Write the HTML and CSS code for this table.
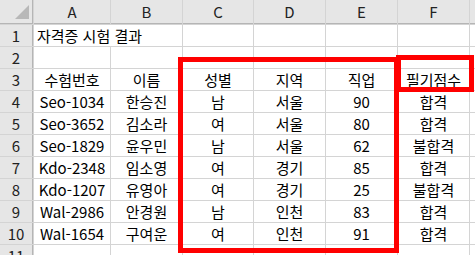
FILE: index.html
```html
<!DOCTYPE html>
<html lang="ko">
<head>
<meta charset="utf-8">
<link rel="stylesheet" href="styles.css">
</head>
<body>
<div class="sheet">
  <div class="grid">
    <div class="hd corner"><svg class="tri" width="14" height="14" viewBox="0 0 14 14"><polygon points="14,0 14,14 0,14" fill="#b8b8b8"/></svg></div>
    <div class="hd col">A</div><div class="hd col">B</div><div class="hd col">C</div><div class="hd col">D</div><div class="hd col">E</div><div class="hd col">F</div><div class="hd col"></div>

    <div class="hd row">1</div><div class="c title">자격증 시험 결과</div><div class="c"></div><div class="c"></div><div class="c"></div><div class="c"></div><div class="c"></div>
    <div class="hd row">2</div><div class="c"></div><div class="c"></div><div class="c"></div><div class="c"></div><div class="c"></div><div class="c"></div><div class="c"></div>
    <div class="hd row">3</div><div class="c">수험번호</div><div class="c">이름</div><div class="c">성별</div><div class="c">지역</div><div class="c">직업</div><div class="c">필기점수</div><div class="c"></div>
    <div class="hd row">4</div><div class="c">Seo-1034</div><div class="c">한승진</div><div class="c">남</div><div class="c">서울</div><div class="c">90</div><div class="c">합격</div><div class="c"></div>
    <div class="hd row">5</div><div class="c">Seo-3652</div><div class="c">김소라</div><div class="c">여</div><div class="c">서울</div><div class="c">80</div><div class="c">합격</div><div class="c"></div>
    <div class="hd row">6</div><div class="c">Seo-1829</div><div class="c">윤우민</div><div class="c">남</div><div class="c">서울</div><div class="c">62</div><div class="c">불합격</div><div class="c"></div>
    <div class="hd row">7</div><div class="c">Kdo-2348</div><div class="c">임소영</div><div class="c">여</div><div class="c">경기</div><div class="c">85</div><div class="c">합격</div><div class="c"></div>
    <div class="hd row">8</div><div class="c">Kdo-1207</div><div class="c">유영아</div><div class="c">여</div><div class="c">경기</div><div class="c">25</div><div class="c">불합격</div><div class="c"></div>
    <div class="hd row">9</div><div class="c">Wal-2986</div><div class="c">안경원</div><div class="c">남</div><div class="c">인천</div><div class="c">83</div><div class="c">합격</div><div class="c"></div>
    <div class="hd row">10</div><div class="c">Wal-1654</div><div class="c">구여운</div><div class="c">여</div><div class="c">인천</div><div class="c">91</div><div class="c">합격</div><div class="c"></div>
    <div class="hd row">11</div><div class="c"></div><div class="c"></div><div class="c"></div><div class="c"></div><div class="c"></div><div class="c"></div><div class="c"></div>
  </div>
  <div class="mark big"></div>
  <div class="mark small"></div>
</div>
</body>
</html>
```
FILE: styles.css
```css
html, body {
  margin: 0;
  padding: 0;
  background: #ffffff;
  overflow: hidden;
}
.sheet {
  position: relative;
  width: 475px;
  height: 255px;
  overflow: hidden;
  font-family: "Noto Sans CJK KR", "Noto Sans", sans-serif;
  font-size: 15px;
  color: #000;
}
.grid {
  display: grid;
  grid-template-columns: 33px 76px 71px 70px 71px 71px 71px 1fr;
  grid-template-rows: 24px repeat(11, 21px);
  gap: 1px;
  background: #d4d4d4;
}
.c {
  background: #ffffff;
  display: flex;
  align-items: center;
  justify-content: center;
  white-space: nowrap;
  line-height: 1;
}
.title {
  grid-column: span 2;
  justify-content: flex-start;
  padding-left: 3px;
}
.hd {
  background: #e6e6e6;
  color: #222;
  display: flex;
  align-items: center;
  justify-content: center;
  line-height: 1;
}
.col {
  border-bottom: 1px solid #b5b5b5;
}
.row {
  border-right: 1px solid #b5b5b5;
}
.corner {
  position: relative;
  border-bottom: 1px solid #b5b5b5;
  border-right: 1px solid #b5b5b5;
}
.tri {
  position: absolute;
  right: 3px;
  bottom: 4px;
}
.mark {
  position: absolute;
  border: 5px solid #ff0000;
  box-sizing: border-box;
}
.big {
  left: 178px;
  top: 57px;
  width: 221px;
  height: 196px;
}
.small {
  left: 396px;
  top: 55px;
  width: 78px;
  height: 37px;
}
```
